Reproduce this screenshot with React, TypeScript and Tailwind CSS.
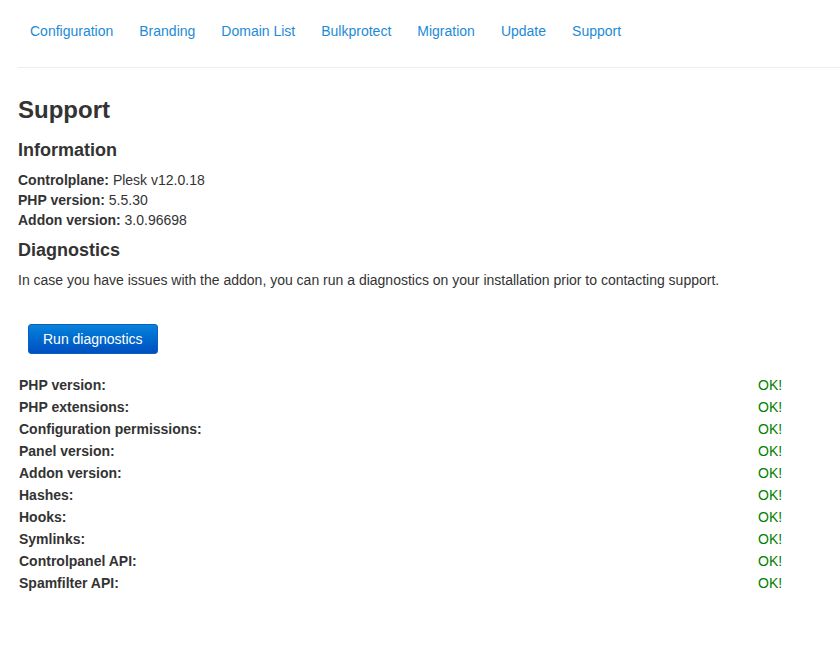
import React from "react";

const navItems = ["Configuration", "Branding", "Domain List", "Bulkprotect", "Migration", "Update", "Support"];
const checks = [
  "PHP version:",
  "PHP extensions:",
  "Configuration permissions:",
  "Panel version:",
  "Addon version:",
  "Hashes:",
  "Hooks:",
  "Symlinks:",
  "Controlpanel API:",
  "Spamfilter API:",
];

export default function App() {
  return (
    <div
      className="min-h-[649px] w-[840px] bg-white text-[14px] leading-[20px] text-[#333333]"
      style={{ fontFamily: '"Liberation Sans", Arial, sans-serif' }}
    >
      <div className="pl-[18px]">
        <nav className="flex h-[62px] items-center gap-[2px]">
          {navItems.map((n) => (
            <a key={n} href="#" className="px-[12px] text-[#1e8ad6]">
              {n}
            </a>
          ))}
        </nav>
        <div className="mt-[5px] border-t border-[#eeeeee]" />

        <h1 className="mt-[28px] text-[24px] font-bold leading-[28px]">Support</h1>
        <h3 className="mt-[14px] text-[18px] font-bold leading-[24px]">Information</h3>
        <div className="mt-[8px]">
          <div>
            <b>Controlplane:</b> Plesk v12.0.18
          </div>
          <div>
            <b>PHP version:</b> 5.5.30
          </div>
          <div>
            <b>Addon version:</b> 3.0.96698
          </div>
        </div>
        <h3 className="mt-[8px] text-[18px] font-bold leading-[24px]">Diagnostics</h3>
        <p className="mt-[8px]">
          In case you have issues with the addon, you can run a diagnostics on your installation prior to contacting support.
        </p>

        <button className="ml-[10px] mt-[34px] h-[30px] rounded-[3px] border border-[#0a5fc4] bg-gradient-to-b from-[#0a82da] to-[#004fc0] px-[14px] text-[14px] text-white">
          Run diagnostics
        </button>

        <div className="mt-[20px] grid grid-cols-[739px_1fr]">
          {checks.map((c) => (
            <React.Fragment key={c}>
              <div className="h-[22px] px-[1px] py-[1px] font-bold">{c}</div>
              <div className="h-[22px] px-[1px] py-[1px] text-[#008000]">OK!</div>
            </React.Fragment>
          ))}
        </div>
      </div>
    </div>
  );
}
